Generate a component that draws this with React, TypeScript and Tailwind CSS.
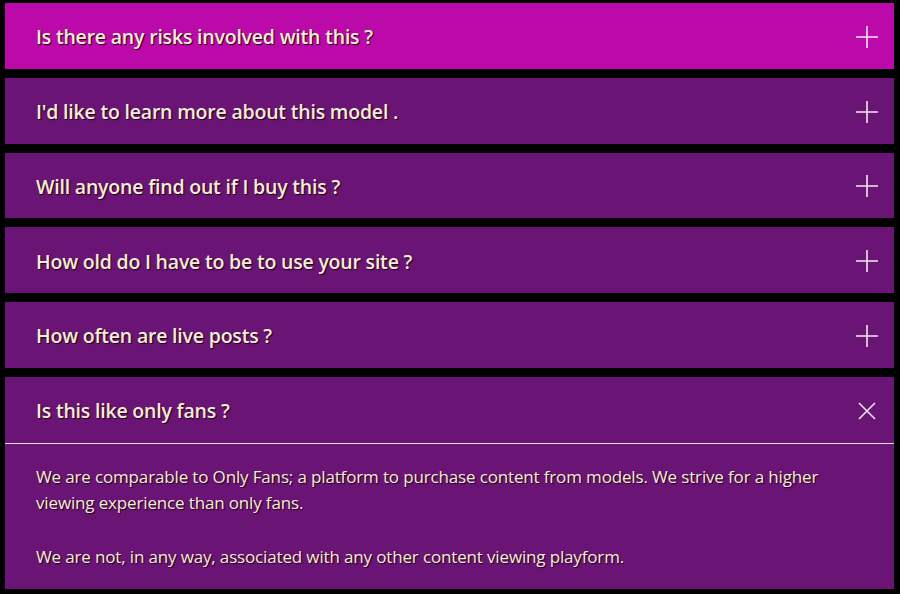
import { useState } from "react";

const faqs = [
  { q: "Is there any risks involved with this ?", a: [] as string[] },
  { q: "I'd like to learn more about this model .", a: [] },
  { q: "Will anyone find out if I buy this ?", a: [] },
  { q: "How old do I have to be to use your site ?", a: [] },
  { q: "How often are live posts ?", a: [] },
  {
    q: "Is this like only fans ?",
    a: [
      "We are comparable to Only Fans; a platform to purchase content from models. We strive for a higher viewing experience than only fans.",
      "We are not, in any way, associated with any other content viewing playform.",
    ],
  },
];

function PlusIcon() {
  return (
    <svg width="24" height="24" viewBox="0 0 24 24" className="text-[#f3e6f0]">
      <path d="M12 1v22M1 12h22" stroke="currentColor" strokeWidth="1.6" fill="none" />
    </svg>
  );
}

function CloseIcon() {
  return (
    <svg width="20" height="20" viewBox="0 0 20 20" className="text-[#f3e6f0]">
      <path d="M2 2l16 16M18 2L2 18" stroke="currentColor" strokeWidth="1.6" fill="none" />
    </svg>
  );
}

export default function App() {
  const [open, setOpen] = useState(5);

  return (
    <div className="min-h-[594px] w-full bg-black pt-[3px] pl-[5px] pr-[6px] pb-[6px] font-['Open_Sans',sans-serif]">
      <div className="flex flex-col gap-[9px]">
        {faqs.map((f, i) => {
          const isOpen = open === i;
          return (
            <div
              key={f.q}
              className={i === 0 ? "bg-[#bc0aaa]" : "bg-[#6a1475]"}
            >
              <button
                onClick={() => setOpen(isOpen ? -1 : i)}
                className="flex h-[65.8px] w-full items-center justify-between pl-[31px] pr-[15px] pt-[2px] text-left"
              >
                <span className="text-[19.5px] font-semibold tracking-[-0.2px] text-[#f5ecdc] [text-shadow:1px_1px_1px_#1a0010]">
                  {f.q}
                </span>
                <span className="flex h-[24px] w-[24px] items-center justify-center">
                  {isOpen ? <CloseIcon /> : <PlusIcon />}
                </span>
              </button>
              {isOpen && (
                <div className="border-t border-[#e8d8e8] pl-[31px] pr-[40px] pt-[20px] pb-[19px]">
                  {f.a.map((p, j) => (
                    <p
                      key={j}
                      className="mb-[28px] text-[17px] leading-[26px] tracking-[-0.15px] text-[#f5ecdc] last:mb-0 [text-shadow:1px_1px_1px_#1a0010]"
                    >
                      {p}
                    </p>
                  ))}
                </div>
              )}
            </div>
          );
        })}
      </div>
    </div>
  );
}
